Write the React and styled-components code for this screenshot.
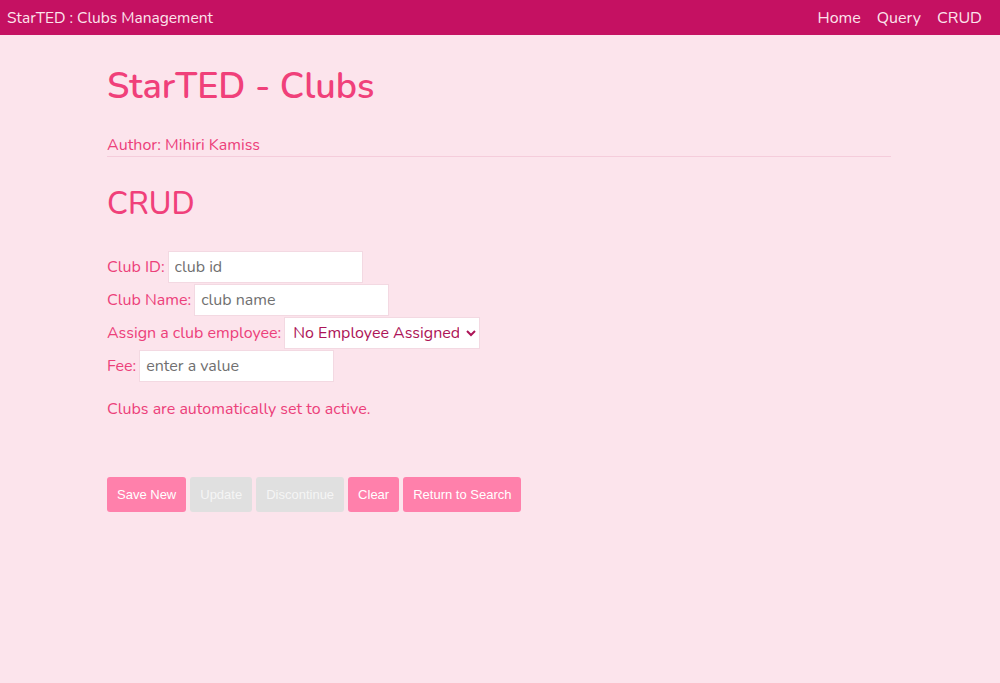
import styled, { createGlobalStyle } from "styled-components";

const GlobalStyle = createGlobalStyle`
    html, body {
        margin: 0;
        padding: 0;
        background: #fce4ec;
        font-family: "Nunito", Lato, "Noto Sans", sans-serif;
    }
    * { box-sizing: border-box; }
`;

const Page = styled.div`
    min-height: 683px;
    background: #fce4ec;
`;

const NavBar = styled.nav`
    height: 35px;
    background: #c51162;
    display: flex;
    align-items: center;
    justify-content: space-between;
    padding: 0 18px 0 7px;
    color: #fce4ec;
    font-size: 16px;
`;

const Brand = styled.div`
    font-size: 15.5px;
`;

const NavLinks = styled.div`
    display: flex;
    gap: 16px;
    font-size: 16px;
`;

const Container = styled.main`
    width: 786px;
    margin: 0 auto;
    padding: 30px 2px 0 0;
`;

const Title = styled.h1`
    margin: 0;
    font-size: 36px;
    font-weight: 600;
    color: #f0407a;
    line-height: 44px;
`;

const Author = styled.p`
    margin: 26px 0 0;
    font-size: 16px;
    color: #ec407a;
    line-height: 20px;
    padding-bottom: 1px;
    border-bottom: 1px solid #f5ccdb;
`;

const SectionTitle = styled.h2`
    margin: 27px 0 0;
    font-size: 31px;
    font-weight: 500;
    color: #f0407a;
    line-height: 40px;
`;

const Form = styled.form`
    margin-top: 27px;
    display: flex;
    flex-direction: column;
    gap: 1px;
`;

const Row = styled.div`
    display: flex;
    align-items: center;
    gap: 3px;
    color: #ec407a;
    font-size: 16px;
`;

const Input = styled.input`
    width: 195px;
    height: 32px;
    border: 1px solid #f3d9e2;
    background: #fff;
    padding: 0 6px;
    font-family: inherit;
    font-size: 16px;
    color: #555;
    outline: none;
    &::placeholder { color: #707070; }
`;

const Select = styled.select`
    width: 196px;
    height: 32px;
    border: 1px solid #f3d9e2;
    background: #fff;
    padding: 0 4px;
    font-family: inherit;
    font-size: 16px;
    color: #ad1457;
`;

const Note = styled.p`
    margin: 16px 0 0;
    color: #ec407a;
    font-size: 16px;
`;

const Buttons = styled.div`
    display: flex;
    gap: 4px;
    margin-top: 57px;
`;

const Button = styled.button`
    height: 35px;
    padding: 0 10px;
    border: none;
    border-radius: 3px;
    font-family: "Liberation Sans", Arial, sans-serif;
    font-size: 13px;
    color: ${p => (p.disabled ? "#f5f5f5" : "#fff")};
    background: ${p => (p.disabled ? "#e0e0e0" : "#ff80ab")};
`;

const App = () => {
    return (
        <Page>
            <GlobalStyle />
            <NavBar>
                <Brand>StarTED : Clubs Management</Brand>
                <NavLinks>
                    <span>Home</span>
                    <span>Query</span>
                    <span>CRUD</span>
                </NavLinks>
            </NavBar>
            <Container>
                <Title>StarTED - Clubs</Title>
                <Author>Author: Mihiri Kamiss</Author>
                <SectionTitle>CRUD</SectionTitle>
                <Form onSubmit={e => e.preventDefault()}>
                    <Row>
                        Club ID:
                        <Input placeholder="club id" />
                    </Row>
                    <Row>
                        Club Name:
                        <Input placeholder="club name" />
                    </Row>
                    <Row>
                        Assign a club employee:
                        <Select defaultValue="none">
                            <option value="none">No Employee Assigned</option>
                        </Select>
                    </Row>
                    <Row>
                        Fee:
                        <Input placeholder="enter a value" />
                    </Row>
                </Form>
                <Note>Clubs are automatically set to active.</Note>
                <Buttons>
                    <Button>Save New</Button>
                    <Button disabled>Update</Button>
                    <Button disabled>Discontinue</Button>
                    <Button>Clear</Button>
                    <Button>Return to Search</Button>
                </Buttons>
            </Container>
        </Page>
    );
};

export default App;
